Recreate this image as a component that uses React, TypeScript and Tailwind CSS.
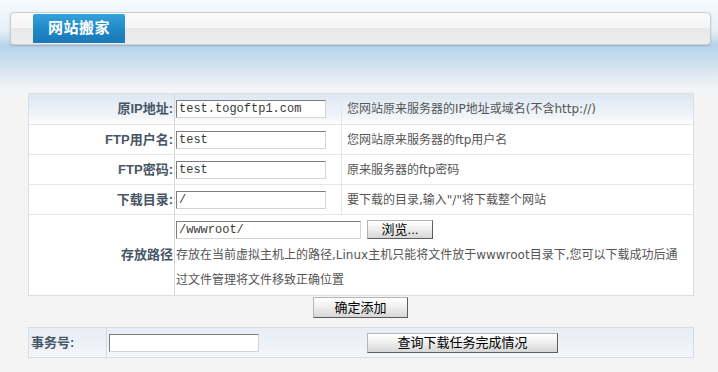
import React from "react";

const cjk = "font-['Liberation_Sans','Noto_Sans_CJK_SC',sans-serif]";
const desc = "font-['DejaVu_Sans','Noto_Sans_CJK_SC',sans-serif]";

function TextInput({ value, w }: { value: string; w: string }) {
  return (
    <div
      className={`${w} h-[18px] bg-white border border-t-[#7c7c7c] border-l-[#7c7c7c] border-b-[#d4d4d4] border-r-[#d4d4d4] flex items-center pl-[2px] text-[12px] leading-none text-[#3a3a3a] font-['Liberation_Mono',monospace]`}
    >
      {value}
    </div>
  );
}

function Btn({ label, cls }: { label: string; cls: string }) {
  return (
    <div
      className={`${cls} flex items-center justify-center border border-t-[#b5b5b5] border-l-[#b5b5b5] border-b-[#5c5c5c] border-r-[#5c5c5c] bg-[linear-gradient(to_bottom,#ffffff,#f0f0f0_45%,#d6d6d6)] text-[13px] text-black leading-none ${cjk}`}
    >
      {label}
    </div>
  );
}

const rows = [
  { label: "原IP地址:", value: "test.togoftp1.com", desc: "您网站原来服务器的IP地址或域名(不含http://)" },
  { label: "FTP用户名:", value: "test", desc: "您网站原来服务器的ftp用户名" },
  { label: "FTP密码:", value: "test", desc: "原来服务器的ftp密码" },
  { label: "下载目录:", value: "/", desc: "要下载的目录,输入\"/\"将下载整个网站" },
];

export default function App() {
  return (
    <div
      className={`w-[718px] h-[372px] overflow-hidden bg-[linear-gradient(to_bottom,#f6fafd_0px,#e8f1f8_30px,#b6d3e9_46px,#c9ddee_60px,#f2f4f6_88px,#f4f4f4_100px)] ${cjk}`}
    >
      {/* header bar */}
      <div className="pt-[12px] pl-[10px]">
        <div className="w-[701px] h-[33px] rounded-[4px] border border-[#c6ced6] shadow-[0_1px_2px_rgba(90,110,130,0.35)] bg-[linear-gradient(to_bottom,#fafafa_0%,#f5f5f5_48%,#e9e9e9_50%,#ececec_100%)] pl-[22px] pt-[1px]">
          <div className="w-[92px] h-[29px] rounded-t-[2px] bg-[linear-gradient(to_bottom,#34a3dd,#2189c8_50%,#1a79b6)] flex items-center justify-center text-white text-[15px] font-bold tracking-[0.5px]">
            网站搬家
          </div>
        </div>
      </div>

      {/* main form */}
      <div className="ml-[28px] mt-[48px] w-[666px] border border-[#dcdfe3] bg-white">
        {rows.map((r, i) => (
          <div
            key={r.label}
            className={`flex h-[30px] ${i > 0 ? "border-t border-[#e4e6e8]" : ""} ${
              i === 0 ? "bg-[linear-gradient(to_bottom,#dde7f1,#f3f6fa_80%,#ffffff)]" : ""
            }`}
          >
            <div className="w-[145px] flex items-center justify-end pr-[1px] text-[13px] font-bold text-[#475666]">
              {r.label}
            </div>
            <div className="w-[167px] border-l border-[#d4d6d8] flex items-center pl-[1px]">
              <TextInput value={r.value} w="w-[150px]" />
            </div>
            <div className={`flex-1 border-l border-[#e4e6e8] flex items-center pl-[5px] text-[12px] text-[#555] ${desc}`}>
              {r.desc}
            </div>
          </div>
        ))}
        <div className="flex h-[81px] border-t border-[#e4e6e8]">
          <div className="w-[145px] flex items-center justify-end pr-[1px] text-[13px] font-bold text-[#475666]">
            存放路径
          </div>
          <div className="flex-1 border-l border-[#d4d6d8] pl-[1px] pt-[5px]">
            <div className="flex items-center gap-[6px]">
              <TextInput value="/wwwroot/" w="w-[185px]" />
              <Btn label="浏览..." cls="w-[66px] h-[19px]" />
            </div>
            <div className={`mt-[4px] text-[12px] leading-[25px] text-[#555] whitespace-nowrap ${desc}`}>
              存放在当前虚拟主机上的路径,Linux主机只能将文件放于wwwroot目录下,您可以下载成功后通
              <br />
              过文件管理将文件移致正确位置
            </div>
          </div>
        </div>
      </div>

      {/* submit */}
      <div className="flex pl-[313px] mt-[1px]">
        <Btn label="确定添加" cls="w-[95px] h-[21px]" />
      </div>

      {/* query bar */}
      <div className="ml-[28px] mt-[9px] w-[666px] h-[31px] border border-[#d8dde3] bg-[linear-gradient(to_bottom,#e6edf5,#f3f6f9)] flex items-center">
        <div className="w-[77px] pl-[2px] text-[13px] font-bold text-[#475666]">事务号:</div>
        <div className="h-full border-l border-[#d6dce2] flex items-center pl-[2px]">
          <TextInput value="" w="w-[150px]" />
        </div>
        <div className="ml-[108px]">
          <Btn label="查询下载任务完成情况" cls="w-[191px] h-[20px]" />
        </div>
      </div>
    </div>
  );
}
